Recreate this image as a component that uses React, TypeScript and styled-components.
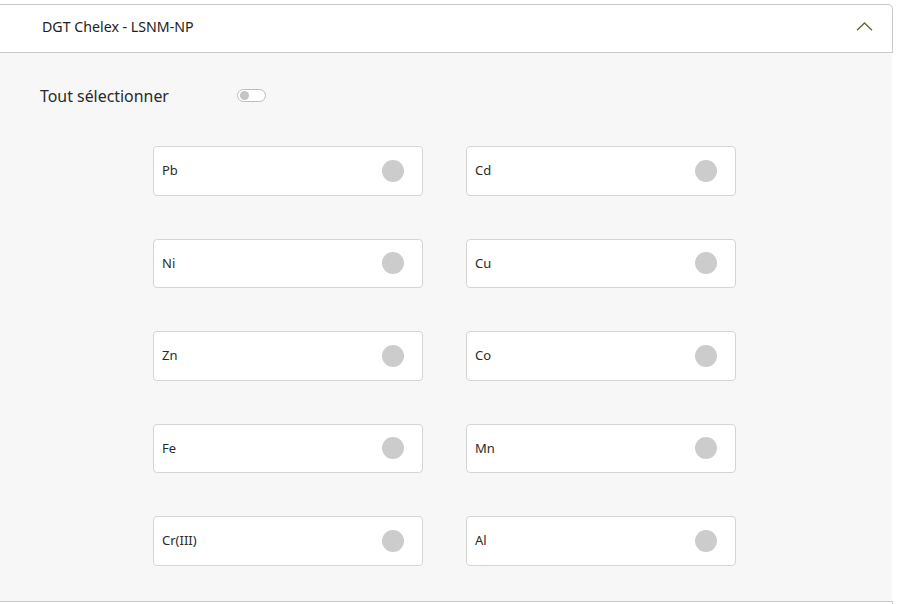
import React, { useState } from "react";
import styled, { createGlobalStyle } from "styled-components";

const colors = {
  line: "#c9c9c9",
  cardLine: "#d4d4d4",
  bodyBg: "#f7f7f7",
  text: "#222222",
  dot: "#cccccc",
  olive: "#5b6b2c",
};

const elements = ["Pb", "Cd", "Ni", "Cu", "Zn", "Co", "Fe", "Mn", "Cr(III)", "Al"];

const GlobalStyle = createGlobalStyle`
  html, body {
    margin: 0;
    padding: 0;
    background: #ffffff;
    font-family: "Noto Sans", "Open Sans", sans-serif;
    color: ${colors.text};
  }
`;

const Toggle = ({ on, onClick }: { on: boolean; onClick: () => void }) => (
  <StyledToggle type="button" $on={on} onClick={onClick} aria-pressed={on}>
    <span className="toggle__knob" />
  </StyledToggle>
);

const ElementCard = ({ name }: { name: string }) => (
  <StyledCard>
    <span className="card__name">{name}</span>
    <span className="card__dot" />
  </StyledCard>
);

const App = () => {
  const [all, setAll] = useState(false);

  return (
    <>
      <GlobalStyle />
      <Panel>
        <Header>
          <span className="header__title">DGT Chelex - LSNM-NP</span>
          <svg width="17" height="9" viewBox="0 0 17 9" fill="none">
            <path d="M1 8.2L8.5 1L16 8.2" stroke={colors.olive} strokeWidth="1.3" />
          </svg>
        </Header>
        <Body>
          <SelectRow>
            <span className="select__label">Tout sélectionner</span>
            <Toggle on={all} onClick={() => setAll(!all)} />
          </SelectRow>
          <CardGrid>
            {elements.map((el) => (
              <ElementCard key={el} name={el} />
            ))}
          </CardGrid>
        </Body>
        <NextItem />
      </Panel>
    </>
  );
};

export default App;

const Panel = styled.section`
  width: 893px;
  height: 600px;
  margin-top: 4px;
  overflow: hidden;
`;

const Header = styled.div`
  height: 47px;
  box-sizing: content-box;
  display: flex;
  align-items: center;
  justify-content: space-between;
  padding: 0 19px 0 42px;
  background: #ffffff;
  border-top: 1px solid ${colors.line};
  border-right: 1px solid ${colors.line};
  border-bottom: 1px solid ${colors.line};
  border-top-right-radius: 5px;

  & .header__title {
    font-size: 14.2px;
    line-height: 20px;
    margin-top: -3px;
  }

  & svg {
    margin-top: -4px;
  }
`;

const Body = styled.div`
  width: 892px;
  height: 548px;
  box-sizing: border-box;
  padding: 33px 0 0 40px;
  background: ${colors.bodyBg};
`;

const SelectRow = styled.div`
  display: flex;
  align-items: center;
  height: 20px;

  & .select__label {
    width: 197px;
    font-size: 15.9px;
    line-height: 20px;
    color: #2a2a2a;
  }
`;

const StyledToggle = styled.button<{ $on: boolean }>`
  position: relative;
  width: 29px;
  height: 13px;
  padding: 0;
  margin: -1px 0 0;
  border: 1px solid #bdbdbd;
  border-radius: 7px;
  background: #ffffff;
  cursor: pointer;

  & .toggle__knob {
    position: absolute;
    top: 1px;
    left: ${(p) => (p.$on ? "17px" : "2px")};
    width: 9px;
    height: 9px;
    border-radius: 50%;
    background: ${(p) => (p.$on ? colors.olive : "#c4c4c4")};
  }
`;

const CardGrid = styled.div`
  display: grid;
  grid-template-columns: 270px 270px;
  column-gap: 43px;
  row-gap: 43px;
  margin: 40px 0 0 113px;
`;

const StyledCard = styled.div`
  height: 49.5px;
  box-sizing: border-box;
  display: flex;
  align-items: center;
  justify-content: space-between;
  padding: 0 18px 0 8px;
  background: #ffffff;
  border: 1px solid ${colors.cardLine};
  border-radius: 4px;

  & .card__name {
    font-size: 13px;
    line-height: 18px;
    color: #2a2a2a;
    margin-top: -1px;
  }

  & .card__dot {
    width: 22px;
    height: 22px;
    border-radius: 50%;
    background: ${colors.dot};
  }
`;

const NextItem = styled.div`
  height: 48px;
  border-top: 1px solid ${colors.line};
  border-right: 1px solid ${colors.line};
`;
